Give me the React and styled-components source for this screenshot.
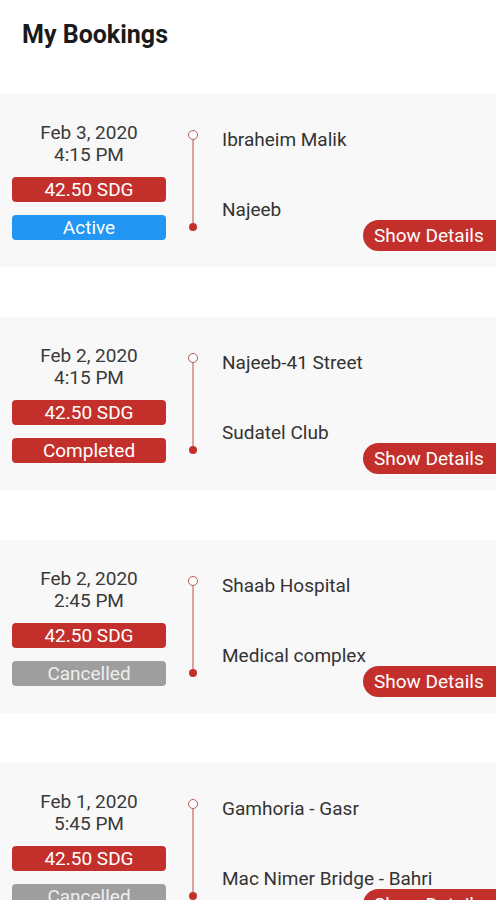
import React from "react";
import styled, { createGlobalStyle } from "styled-components";

const bookings = [
   { date: "Feb 3, 2020", time: "4:15 PM", price: "42.50 SDG", status: "Active", from: "Ibraheim Malik", to: "Najeeb" },
   { date: "Feb 2, 2020", time: "4:15 PM", price: "42.50 SDG", status: "Completed", from: "Najeeb-41 Street", to: "Sudatel Club" },
   { date: "Feb 2, 2020", time: "2:45 PM", price: "42.50 SDG", status: "Cancelled", from: "Shaab Hospital", to: "Medical complex" },
   { date: "Feb 1, 2020", time: "5:45 PM", price: "42.50 SDG", status: "Cancelled", from: "Gamhoria - Gasr", to: "Mac Nimer Bridge - Bahri" },
];

const statusColors = {
   Active: { bg: "#2196f3", fg: "#ffffff" },
   Completed: { bg: "#c3302c", fg: "#ffffff" },
   Cancelled: { bg: "#9e9e9e", fg: "#eeeeee" },
};

const App = () => {
   return (
      <>
         <Global />
         <Page>
            <Header>
               <Title>My Bookings</Title>
            </Header>
            <List>
               {bookings.map((b, i) => (
                  <Card key={i}>
                     <Left>
                        <DateText>{b.date}</DateText>
                        <DateText>{b.time}</DateText>
                        <Price>{b.price}</Price>
                        <Status $status={b.status}>{b.status}</Status>
                     </Left>
                     <Timeline>
                        <Ring />
                        <Line />
                        <Dot />
                     </Timeline>
                     <Right>
                        <Place>{b.from}</Place>
                        <Place $to>{b.to}</Place>
                        <DetailsButton type="button">Show Details</DetailsButton>
                     </Right>
                  </Card>
               ))}
            </List>
         </Page>
      </>
   );
};

const Global = createGlobalStyle`
   html, body {
      margin: 0;
      padding: 0;
      background: #ffffff;
      overflow: hidden;
   }
   body {
      font-family: Roboto, "Liberation Sans", sans-serif;
   }
`;

const Page = styled.div`
   width: 496px;
   background: #ffffff;
`;

const Header = styled.header`
   height: 94px;
   display: flex;
   align-items: flex-start;
   padding: 20px 0 0 22px;
   box-sizing: border-box;
`;

const Title = styled.h1`
   margin: 0;
   font-size: 25px;
   line-height: 30px;
   font-weight: 700;
   color: #1a1a1a;
`;

const List = styled.div`
   display: flex;
   flex-direction: column;
   gap: 50px;
`;

const Card = styled.div`
   height: 173px;
   background: #f8f8f8;
   display: flex;
`;

const Left = styled.div`
   width: 154px;
   margin-left: 12px;
   padding-top: 28px;
   display: flex;
   flex-direction: column;
   align-items: stretch;
`;

const DateText = styled.div`
   font-size: 19px;
   line-height: 22px;
   color: #3a3a3a;
   text-align: center;
`;

const Badge = styled.div`
   height: 25px;
   border-radius: 4px;
   font-size: 19px;
   line-height: 25px;
   text-align: center;
`;

const Price = styled(Badge)`
   margin-top: 11px;
   background: #c3302c;
   color: #ffffff;
`;

const Status = styled(Badge)`
   margin-top: 13px;
   background: ${(p) => statusColors[p.$status].bg};
   color: ${(p) => statusColors[p.$status].fg};
`;

const Timeline = styled.div`
   width: 54px;
   padding-top: 36px;
   display: flex;
   flex-direction: column;
   align-items: center;
`;

const Ring = styled.div`
   width: 10px;
   height: 10px;
   box-sizing: border-box;
   border: 1.5px solid #b45a5a;
   border-radius: 50%;
   background: #ffffff;
`;

const Line = styled.div`
   width: 2px;
   height: 83px;
   background: #d8a2a2;
`;

const Dot = styled.div`
   width: 8px;
   height: 8px;
   border-radius: 50%;
   background: #c3302c;
`;

const Right = styled.div`
   flex: 1;
   padding-top: 35px;
   display: flex;
   flex-direction: column;
   align-items: flex-start;
`;

const Place = styled.div`
   font-size: 19px;
   line-height: 22px;
   color: #333333;
   margin-top: ${(p) => (p.$to ? "48px" : "0")};
   margin-left: 2px;
   white-space: nowrap;
`;

const DetailsButton = styled.button`
   align-self: flex-end;
   margin-top: -1px;
   width: 133px;
   height: 31px;
   border: none;
   border-radius: 16px 0 0 16px;
   background: #c3302c;
   color: #ffffff;
   font-family: Roboto, "Liberation Sans", sans-serif;
   font-size: 19px;
   text-align: left;
   padding: 0 0 0 11px;
   cursor: pointer;
`;

export default App;
